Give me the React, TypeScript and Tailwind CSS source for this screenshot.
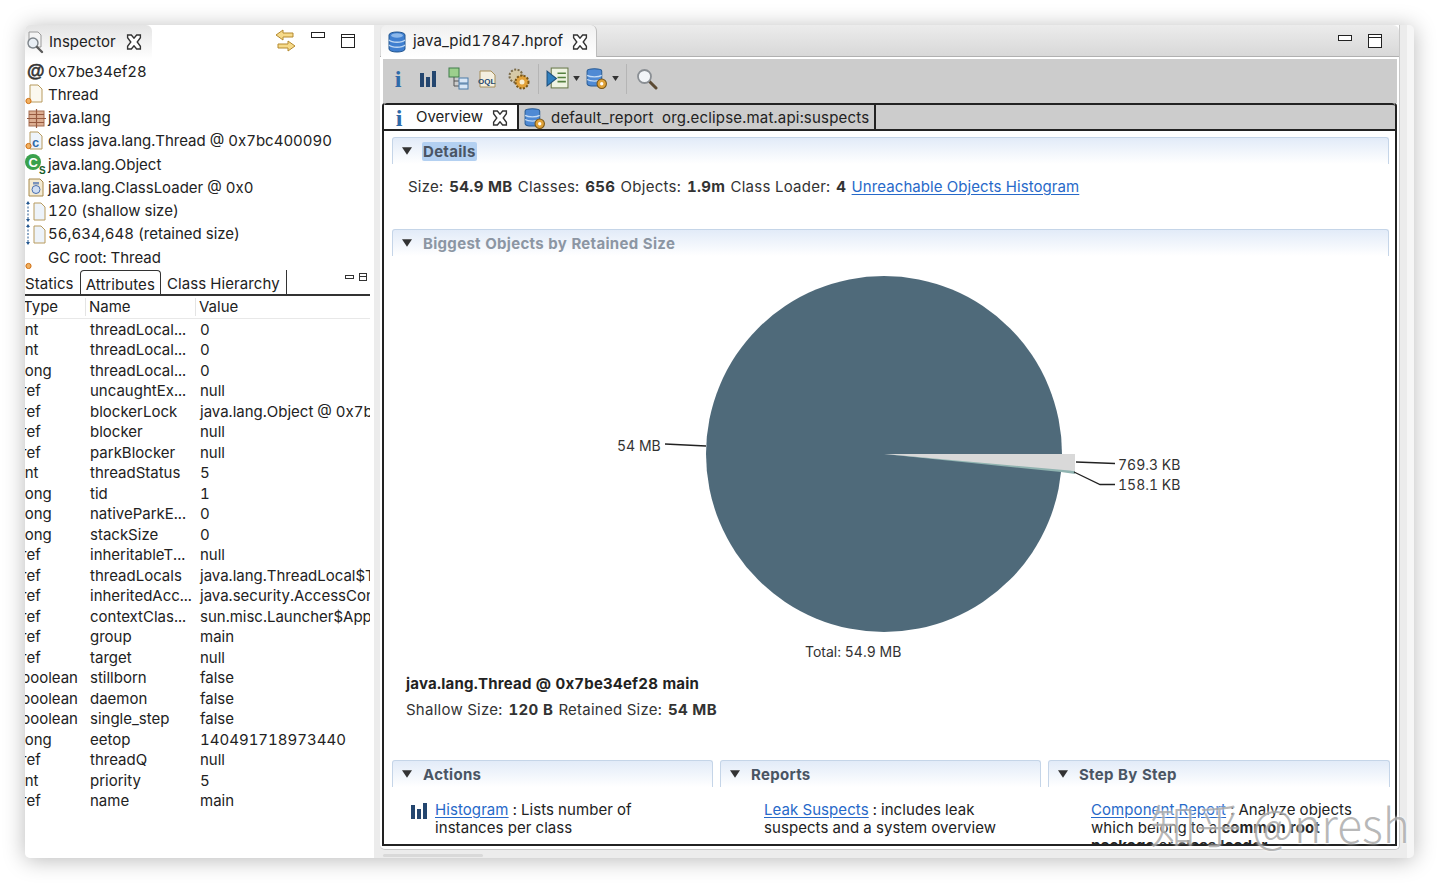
import type { ReactNode } from 'react';

const inspectorRows = [
  { icon: 'at', text: '0x7be34ef28' },
  { icon: 'page', text: 'Thread' },
  { icon: 'package', text: 'java.lang' },
  { icon: 'classFile', text: 'class java.lang.Thread @ 0x7bc400090' },
  { icon: 'superclass', text: 'java.lang.Object' },
  { icon: 'loader', text: 'java.lang.ClassLoader @ 0x0' },
  { icon: 'size', text: '120 (shallow size)' },
  { icon: 'size', text: '56,634,648 (retained size)' },
  { icon: 'root', text: 'GC root: Thread' },
];

const attributes = [
  ['int', 'threadLocal...', '0'],
  ['int', 'threadLocal...', '0'],
  ['long', 'threadLocal...', '0'],
  ['ref', 'uncaughtEx...', 'null'],
  ['ref', 'blockerLock', 'java.lang.Object @ 0x7be34f000'],
  ['ref', 'blocker', 'null'],
  ['ref', 'parkBlocker', 'null'],
  ['int', 'threadStatus', '5'],
  ['long', 'tid', '1'],
  ['long', 'nativeParkE...', '0'],
  ['long', 'stackSize', '0'],
  ['ref', 'inheritableT...', 'null'],
  ['ref', 'threadLocals', 'java.lang.ThreadLocal$ThreadLocalMap'],
  ['ref', 'inheritedAcc...', 'java.security.AccessControlContext'],
  ['ref', 'contextClas...', 'sun.misc.Launcher$AppClassLoader'],
  ['ref', 'group', 'main'],
  ['ref', 'target', 'null'],
  ['boolean', 'stillborn', 'false'],
  ['boolean', 'daemon', 'false'],
  ['boolean', 'single_step', 'false'],
  ['long', 'eetop', '140491718973440'],
  ['ref', 'threadQ', 'null'],
  ['int', 'priority', '5'],
  ['ref', 'name', 'main'],
];

function CloseIcon() {
  return (
    <svg width="16" height="16" viewBox="0 0 15 15" className="shrink-0">
      <path
        d="M1.500 1 L5 1 L7.500 4 L10 1 L13.500 1 L13.500 3.500 L10.500 7.500 L13.500 11.500 L13.500 14 L10 14 L7.500 11 L5 14 L1.500 14 L1.500 11.500 L4.500 7.500 L1.500 3.500 Z"
        fill="#fff"
        stroke="#333"
        strokeWidth="1.300"
      />
    </svg>
  );
}

function MinIcon() {
  return <div className="w-[14px] h-[6px] border border-[#222] bg-white" />;
}

function MaxIcon() {
  return (
    <div className="w-[14px] h-[14px] border border-[#222] bg-white">
      <div className="h-[3px] border-b border-[#222]" />
    </div>
  );
}

function HeapIcon() {
  return (
    <svg width="18" height="22" viewBox="0 0 18 22" className="shrink-0">
      <path d="M1 4 C1 0 17 0 17 4 L17 18 C17 22 1 22 1 18 Z" fill="#3f7fd0" stroke="#23568f" />
      <path d="M1 9 C4 12 14 12 17 9 M1 14 C4 17 14 17 17 14" fill="none" stroke="#bcd6f2" strokeWidth="1.500" />
      <ellipse cx="9" cy="4.500" rx="6" ry="2.200" fill="#8db8ea" />
    </svg>
  );
}

function HeapGearIcon() {
  return (
    <svg width="23" height="23" viewBox="0 0 22 22" className="shrink-0">
      <path d="M2 4 C2 1 16 1 16 4 L16 16 C16 19 2 19 2 16 Z" fill="#4f8ad4" stroke="#2a5d96" />
      <path d="M2 8 C5 10 13 10 16 8 M2 12 C5 14 13 14 16 12" fill="none" stroke="#c4dbf4" strokeWidth="1.200" />
      <circle cx="16" cy="16" r="4.500" fill="#e0a33a" stroke="#7a5616" />
      <circle cx="16" cy="16" r="1.600" fill="#fff" />
    </svg>
  );
}

function InfoIcon() {
  return (
    <span className="w-[16px] shrink-0 text-center text-[24px] leading-none font-bold text-[#2f6aa8] font-['Liberation_Serif',serif]">
      i
    </span>
  );
}

function BarsIcon({ size = 18 }: { size?: number }) {
  return (
    <svg width={size} height={size} viewBox="0 0 18 18" className="shrink-0">
      <path d="M1 3h4v14H1zM7 7h4v10H7zM13 1h4v16h-4z" fill="#24466f" />
    </svg>
  );
}

function RowIcon({ kind }: { kind: string }) {
  const page = 'M5 2h8l4 4v13H5z';
  return (
    <svg width="24" height="23" viewBox="0 0 24 23" className="shrink-0">
      {kind === 'at' && (
        <text x="2" y="17" fontSize="18" fontWeight="700" fill="#333" stroke="#333" strokeWidth="0.500" fontFamily="Liberation Sans, sans-serif">
          @
        </text>
      )}
      {kind === 'page' && <path d={page} fill="#fbf8ef" stroke="#b89b5e" />}
      {kind === 'package' && (
        <g>
          <rect x="4" y="4" width="15" height="15" fill="#dcae92" stroke="#a56f52" />
          <path d="M11.500 2v19M2 11.500h19M4 7.500h15M4 15.500h15" stroke="#96593f" strokeWidth="1.200" />
        </g>
      )}
      {kind === 'classFile' && (
        <g>
          <path d={page} fill="#eef4fb" stroke="#b89b5e" />
          <text x="7" y="17" fontSize="13" fontWeight="700" fill="#2f6aa8" fontFamily="Liberation Sans, sans-serif">
            c
          </text>
        </g>
      )}
      {kind === 'superclass' && (
        <g>
          <circle cx="8" cy="9" r="8" fill="#3aa14c" />
          <text x="3.500" y="14" fontSize="13" fontWeight="700" fill="#fff" fontFamily="Liberation Sans, sans-serif">
            C
          </text>
          <text x="14" y="21" fontSize="10" fontWeight="700" fill="#175c28" fontFamily="Liberation Sans, sans-serif">
            S
          </text>
        </g>
      )}
      {kind === 'loader' && (
        <g>
          <path d="M4 3h11l3 3v14H4z" fill="#f3ead2" stroke="#a88a4c" />
          <rect x="8" y="6" width="6" height="2.500" fill="#7a93bb" />
          <circle cx="11" cy="13.500" r="4" fill="#cfdef3" stroke="#4a6fae" />
        </g>
      )}
      {kind === 'size' && (
        <g>
          <path d="M9 3h7l4 4v13H9z" fill="#edf3fa" stroke="#b89b5e" />
          <path d="M3 3v17" stroke="#23568f" strokeDasharray="2 1.500" />
          <path d="M3 1l-2 3h4zM3 22l-2-3h4z" fill="#23568f" />
        </g>
      )}
      {(kind === 'page' || kind === 'classFile' || kind === 'root') && (
        <circle cx="3.500" cy={kind === 'classFile' ? 16 : kind === 'root' ? 20 : 18} r="2.600" fill="#f0b061" stroke="#d06f12" />
      )}
    </svg>
  );
}

function InspectorIcon() {
  return (
    <svg width="20" height="24" viewBox="0 0 20 24" className="shrink-0">
      <path d="M4 2h9l3 3v12H4z" fill="#f4f4f4" stroke="#9a9a9a" />
      <circle cx="8" cy="13" r="5" fill="#e8eef4" stroke="#7d848a" strokeWidth="1.400" />
      <path d="M12 17l5 5" stroke="#5b5b5b" strokeWidth="2.400" strokeLinecap="round" />
    </svg>
  );
}

function SyncIcon() {
  return (
    <svg width="24" height="24" viewBox="0 0 24 24">
      <path d="M9 1 L2 6 L9 11 L9 8 L19 8 L19 4 L9 4 Z" fill="#f6da8a" stroke="#b4892f" />
      <path d="M14 12 L21 17 L14 22 L14 19 L4 19 L4 15 L14 15 Z" fill="#f6da8a" stroke="#b4892f" />
    </svg>
  );
}

function SearchIcon() {
  return (
    <svg width="22" height="22" viewBox="0 0 22 22" className="ml-[2px]">
      <path d="M13 13l7 7" stroke="#5b4a33" strokeWidth="3" strokeLinecap="round" />
      <circle cx="8.500" cy="8.500" r="6.500" fill="#f2f5f8" stroke="#8a8f94" strokeWidth="1.800" />
    </svg>
  );
}

function Caret({ size = 8 }: { size?: number }) {
  return (
    <svg width={size} height={size - 2} viewBox="0 0 8 6" className="shrink-0">
      <path d="M0 0h8L4 6z" fill="#333" />
    </svg>
  );
}

function Separator() {
  return <div className="w-px h-[30px] bg-[#b5b5b5] mx-[7px]" />;
}

function Toolbar() {
  return (
    <div className="h-[44px] ml-[3px] mr-[2px] mt-[2px] pb-[5px] bg-[#cccccc] flex items-center pl-[7px] shrink-0">
      <InfoIcon />
      <div className="ml-[13px]">
        <BarsIcon />
      </div>
      <svg width="22" height="24" viewBox="0 0 22 24" className="ml-[11px]">
        <rect x="1" y="1" width="10" height="9" fill="#9ccf8d" stroke="#3f7c4a" />
        <path d="M6 10v9h5M6 14h5" stroke="#555" fill="none" />
        <rect x="11" y="11" width="9" height="5" fill="#d8e6f5" stroke="#4a7aa8" />
        <rect x="11" y="17" width="9" height="5" fill="#d8e6f5" stroke="#4a7aa8" />
      </svg>
      <svg width="20" height="20" viewBox="0 0 20 20" className="ml-[7px]">
        <path d="M3 2h11l4 4v12H3z" fill="#f4efe0" stroke="#a8905a" />
        <text x="1" y="15" fontSize="8" fontWeight="700" fill="#23466f" fontFamily="Liberation Sans, sans-serif">
          OQL
        </text>
      </svg>
      <svg width="24" height="24" viewBox="0 0 24 24" className="ml-[10px]">
        <circle cx="9" cy="9" r="6.500" fill="#d6c9a6" stroke="#7a6a48" strokeWidth="2" strokeDasharray="2 1.500" />
        <circle cx="15" cy="15" r="6.500" fill="#e2a23a" stroke="#7a5616" strokeWidth="2" strokeDasharray="2 1.500" />
        <circle cx="15" cy="15" r="2.500" fill="#f8eed2" />
      </svg>
      <Separator />
      <svg width="23" height="23" viewBox="0 0 22 22">
        <rect x="5" y="1" width="16" height="19" fill="#eef3e2" stroke="#6a7a4c" />
        <path d="M11 6h8M11 10h8M11 14h8" stroke="#55803f" strokeWidth="1.500" />
        <path d="M1 4l9 7-9 7z" fill="#2f7fbf" stroke="#1c4f7d" />
      </svg>
      <div className="ml-[4px]">
        <Caret size={7} />
      </div>
      <div className="ml-[5px]">
        <HeapGearIcon />
      </div>
      <div className="ml-[4px]">
        <Caret size={7} />
      </div>
      <Separator />
      <SearchIcon />
    </div>
  );
}

function SectionHeader({ title, dim, selected }: { title: string; dim?: boolean; selected?: boolean }) {
  return (
    <div className="h-[27px] border border-b-0 border-[#c5d5e8] rounded-t-[3px] bg-gradient-to-b from-[#e2ebf8] to-white flex items-center pl-[9px] gap-[11px] shrink-0">
      <Caret size={10} />
      <span
        className={`text-[15px] font-bold leading-[19px] tracking-[0.3px] ${dim ? 'text-[#8c96a3]' : 'text-[#4a5564]'} ${selected ? 'bg-[#b3d0f1] rounded-[2px] px-px -mx-px' : ''}`}
      >
        {title}
      </span>
    </div>
  );
}

function ActionColumn({ title, width, children }: { title: string; width: string; children: ReactNode }) {
  return (
    <div className={`${width} shrink-0 flex flex-col`}>
      <SectionHeader title={title} />
      <div className="text-[15px] leading-[18px] tracking-[0.07px] text-[#222] pt-[14px]">{children}</div>
    </div>
  );
}

function Link({ children }: { children: ReactNode }) {
  return <span className="text-[#2769c9] underline underline-offset-2 tracking-[0.08px]">{children}</span>;
}

// bold values in the details lines sit a little apart from their labels
function Value({ children }: { children: ReactNode }) {
  return <b className="ml-[6px] mr-px tracking-[0.3px]">{children}</b>;
}

function PieChart() {
  return (
    <svg width="998" height="402" viewBox="392 262 998 402" className="shrink-0">
      <circle cx="884" cy="454" r="178" fill="#4f6a7a" />
      <path d="M884 454 L1061 468 L1075 471 L1075 474 L1061 472 Z" fill="#8fb3b0" />
      <path d="M884 454 L1075 454 L1075 471 Z" fill="#d9d9d9" />
      <path d="M665 444 L706 446" stroke="#222" strokeWidth="1.300" fill="none" />
      <path d="M1076 462 L1115 463.500" stroke="#222" strokeWidth="1.300" fill="none" />
      <path d="M1074 472 L1100 484.500 L1115 484.500" stroke="#222" strokeWidth="1.300" fill="none" />
      <g fontSize="14" fill="#333" fontFamily="Inter, sans-serif">
        <text x="617" y="451">54 MB</text>
        <text x="1118" y="470">769.3 KB</text>
        <text x="1118" y="490">158.1 KB</text>
        <text x="805" y="657">Total: 54.9 MB</text>
      </g>
    </svg>
  );
}

function Overview() {
  return (
    <div className="flex-1 min-h-0 overflow-hidden flex flex-col pl-[8px] pr-[6px] pt-[6px]">
      <SectionHeader title="Details" selected />
      <div className="text-[15px] leading-[20px] text-[#333] tracking-[0.25px] pl-[16px] pt-[13px] h-[65px] shrink-0 whitespace-nowrap">
        Size:<Value>54.9 MB</Value> Classes:<Value>656</Value> Objects:<Value>1.9m</Value> Class Loader:<Value>4</Value>{' '}
        <Link>Unreachable Objects Histogram</Link>
      </div>
      <SectionHeader title="Biggest Objects by Retained Size" dim />
      <div className="mt-[6px]">
        <PieChart />
      </div>
      <div className="pl-[14px] text-[15px] text-[#222] leading-[20px] mt-[10px] shrink-0">
        <div className="font-bold tracking-[0.22px]">java.lang.Thread @ 0x7be34ef28 main</div>
        <div className="mt-[6px] text-[#333] tracking-[0.25px]">
          Shallow Size:<Value>120 B</Value> Retained Size:<Value>54 MB</Value>
        </div>
      </div>
      <div className="flex gap-[7px] mt-[40px]">
        <ActionColumn title="Actions" width="w-[321px]">
          <div className="flex pl-[18px] gap-[7px]">
            <div className="flex flex-col gap-[25px] pt-[1px]">
              <BarsIcon size={18} />
              <div className="w-[12px] h-[12px] ml-[1px] border border-[#3f8a4f] bg-[#bfe3c2]" />
            </div>
            <div>
              <Link>Histogram</Link> : Lists number of
              <br />
              instances per class
            </div>
          </div>
        </ActionColumn>
        <ActionColumn title="Reports" width="w-[321px]">
          <div className="pl-[44px]">
            <Link>Leak Suspects</Link> : includes leak
            <br />
            suspects and a system overview
          </div>
        </ActionColumn>
        <ActionColumn title="Step By Step" width="w-[342px]">
          <div className="pl-[43px]">
            <Link>Component Report</Link> : Analyze objects
            <br />
            which belong to a <b>common root</b>
            <br />
            <b>package</b> or <b>class loader</b>.
          </div>
        </ActionColumn>
      </div>
    </div>
  );
}

function InspectorPanel() {
  return (
    <div className="w-[349px] shrink-0 flex flex-col overflow-hidden bg-white">
      <div className="h-[34px] flex shrink-0">
        <div className="w-[127px] bg-gradient-to-b from-[#e4e4e4] to-white rounded-tr-[6px] flex items-center">
          <InspectorIcon />
          <span className="ml-[4px] text-[15px]">Inspector</span>
          <span className="ml-[10px]">
            <CloseIcon />
          </span>
        </div>
        <div className="flex-1 flex items-center justify-end pr-[19px] gap-[13px] -mt-[3px]">
          <SyncIcon />
          <div className="mb-[12px]">
            <MinIcon />
          </div>
          <div className="ml-[3px]">
            <MaxIcon />
          </div>
        </div>
      </div>
      <div className="shrink-0 pt-[1px]">
        {inspectorRows.map((r) => (
          <div key={r.text} className="h-[23.25px] flex items-center whitespace-nowrap text-[15px] leading-[20px]">
            <RowIcon kind={r.icon} />
            <span className="-ml-px">{r.text}</span>
          </div>
        ))}
      </div>
      <div className="h-[26px] mt-[1px] flex items-end mr-[4px] border-b-2 border-[#333] relative shrink-0 text-[15px] leading-[20px] tracking-[0.08px]">
        <div className="pr-[6px] h-[20px]">Statics</div>
        <div className="px-[5px] h-[24px] pt-[4px] border border-b-0 border-[#333] rounded-t-[4px]">Attributes</div>
        <div className="pl-[6px] pr-[6px] h-[24px] pt-[4px] border-r border-[#333]">Class Hierarchy</div>
        <div className="absolute right-[3px] top-[3px] flex gap-[5px] items-center">
          <div className="w-[9px] h-[4px] border border-[#333]" />
          <div className="w-[8px] h-[8px] border border-[#333]">
            <div className="h-[3px] border-b border-[#333]" />
          </div>
        </div>
      </div>
      <div className="mr-[4px] overflow-hidden text-[15px]">
        <div className="h-[23px] flex items-center border-b border-[#e8e8e8] text-[#222] whitespace-nowrap -ml-[2px]">
          <div className="w-[63px] shrink-0 border-r border-[#e4e4e4] h-[18px] leading-[18px]">Type</div>
          <div className="w-[110px] shrink-0 pl-[3px] border-r border-[#e4e4e4] h-[18px] leading-[18px]">Name</div>
          <div className="pl-[3px]">Value</div>
        </div>
        <div>
          {attributes.map((a, i) => (
            <div key={i} className="h-[20.5px] flex items-center whitespace-nowrap leading-[20px] text-[#222]">
              <div className="w-[65px] shrink-0 -ml-[4px] mr-[4px]">{a[0]}</div>
              <div className="w-[110px] shrink-0">{a[1]}</div>
              <div>{a[2]}</div>
            </div>
          ))}
        </div>
      </div>
    </div>
  );
}

function EditorPanel() {
  return (
    <div className="w-[1020px] shrink-0 h-full flex flex-col bg-[#ececec]">
      <div className="h-[825px] bg-white rounded-b-[5px] border-b border-r border-[#c9c9c9] flex flex-col">
        <div className="h-[32px] flex bg-gradient-to-b from-[#ececec] to-[#d8d8d8] border-b border-[#b0b0b0] rounded-tr-[6px] shrink-0">
          <div className="w-[216px] h-[32px] bg-gradient-to-b from-[#f0f0f0] to-white border-r border-[#bdbdbd] rounded-t-[6px] flex items-center pl-[7px] pt-px ml-px">
            <HeapIcon />
            <span className="ml-[7px] text-[15px] tracking-[0.08px]">java_pid17847.hprof</span>
            <span className="ml-[9px]">
              <CloseIcon />
            </span>
          </div>
          <div className="flex-1 flex justify-end items-center gap-[16px] pr-[17px]">
            <div className="mb-[6px]">
              <MinIcon />
            </div>
            <MaxIcon />
          </div>
        </div>
        <Toolbar />
        <div className="flex-1 min-h-0 ml-[2px] mr-[2px] mb-[3px] border-2 border-t-0 border-[#222] rounded-t-[3px] flex flex-col overflow-hidden">
          <div className="h-[28px] shrink-0 bg-[#cccccc] flex border-t-2 border-b-2 border-[#222] rounded-t-[3px]">
            <div className="w-[135px] bg-white border-r-2 border-[#222] flex items-center pl-[7px] pt-px">
              <InfoIcon />
              <span className="ml-[9px] text-[15px]">Overview</span>
              <span className="ml-[9px]">
                <CloseIcon />
              </span>
            </div>
            <div className="w-[357px] border-r-2 border-[#222] flex items-center pl-[4px] pt-[2px]">
              <HeapGearIcon />
              <span className="ml-[5px] text-[15px] whitespace-pre tracking-[0.2px]">default_report  org.eclipse.mat.api:suspects</span>
            </div>
          </div>
          <div className="flex-1 min-h-0 bg-white flex flex-col">
            <Overview />
          </div>
        </div>
      </div>
      <div className="w-[100px] h-[3px] mt-[4px] ml-[3px] rounded-full bg-[#d9d9d9]" />
    </div>
  );
}

export default function App() {
  return (
    <div className="w-[1440px] h-[883px] bg-white pt-[25px] pl-[25px] overflow-hidden relative font-['Inter',sans-serif] tabular-nums text-[#222]">
      <div className="w-[1389px] h-[833px] flex rounded-[5px] bg-[#ededed] shadow-[0_2px_22px_rgba(0,0,0,0.28)] overflow-hidden">
        <InspectorPanel />
        <div className="w-[6px] shrink-0 bg-[#ececec]" />
        <EditorPanel />
        <div className="w-[7px] shrink-0 bg-[#ececec]" />
        <div className="flex-1 bg-[#f6f6f6]" />
      </div>
      <div className="absolute left-[1150px] top-[793px] text-[46px] leading-[60px] text-[#999]/70 [text-shadow:0_0_3px_white] font-['Noto_Sans_CJK_SC','Noto_Sans',sans-serif] font-light whitespace-nowrap">
        知乎 @nresh
      </div>
    </div>
  );
}
